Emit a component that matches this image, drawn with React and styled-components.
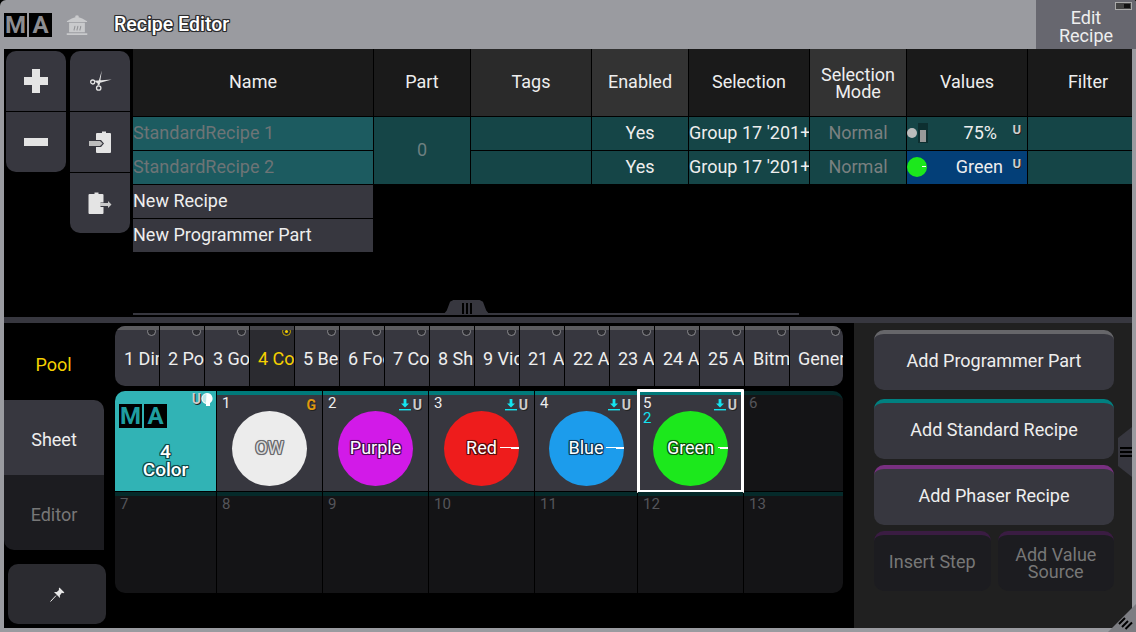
import React from 'react';
import styled, { createGlobalStyle } from 'styled-components';

const outline = (c, w = 1) =>
  [[-w, -w], [w, -w], [-w, w], [w, w], [0, -w], [0, w], [-w, 0], [w, 0]]
    .map(([x, y]) => `${x}px ${y}px 0 ${c}`)
    .concat(`0 0 2px ${c}`)
    .join(', ');

const Global = createGlobalStyle`
  html, body { margin: 0; padding: 0; background: #000; }
  * { box-sizing: border-box; }
`;

const Root = styled.div`
  position: relative;
  width: 1136px;
  height: 632px;
  background: #9a9ba0;
  border-radius: 6px 3px 0 0;
  overflow: hidden;
  display: flex;
  flex-direction: column;
  font-family: Roboto, "Liberation Sans", sans-serif;
  font-size: 18px;
  color: #eee;
`;

const TitleBar = styled.header`
  height: 49px;
  flex: none;
  display: flex;
  align-items: center;
  padding-left: 4px;
`;

const LogoWrap = styled.div`
  display: flex;
  gap: 2px;
`;

const LogoBox = styled.span`
  width: 23px;
  height: 24px;
  background: #000;
  color: ${(p) => p.$color};
  font-weight: 700;
  font-size: 24px;
  line-height: 25px;
  text-align: center;
`;

const PotIcon = styled.svg`
  width: 22px;
  height: 22px;
  margin-left: 14px;
  flex: none;
`;

const Title = styled.h1`
  margin: 0 0 0 26px;
  font-size: 19.5px;
  font-weight: 500;
  color: #fff;
  text-shadow: ${outline('#2c2c2e')};
`;

const EditButton = styled.button`
  position: relative;
  margin-left: auto;
  width: 100px;
  height: 49px;
  border: 0;
  padding: 5px 0 0;
  background: #67676f;
  color: #eee;
  font: inherit;
  line-height: 18px;
  text-align: center;
`;

const Battery = styled.span`
  position: absolute;
  top: 2px;
  right: 4px;
  width: 17px;
  height: 8px;
  border: 1px solid #aaa;
  background: #444;
  &::after {
    content: '';
    position: absolute;
    top: 1px;
    right: 1px;
    width: 6px;
    height: 4px;
    background: #111;
  }
`;

const Body = styled.main`
  flex: 1;
  min-height: 0;
  margin: 0 4px 4px;
  background: #000;
  display: flex;
  flex-direction: column;
`;

const TopPanel = styled.section`
  height: 268px;
  flex: none;
  display: flex;
  flex-direction: column;
`;

const TopContent = styled.div`
  height: 264px;
  flex: none;
  display: flex;
`;

const Tools = styled.div`
  display: flex;
  gap: 4px;
  padding: 2px 0 0 2px;
  width: 129px;
  flex: none;
  align-items: flex-start;
`;

const ToolColumn = styled.div`
  display: flex;
  flex-direction: column;
  gap: 1px;
  width: 60px;
`;

const ToolButton = styled.button`
  width: 60px;
  height: 60px;
  border: 0;
  padding: 0;
  background: #37373f;
  display: flex;
  align-items: center;
  justify-content: center;
  &:first-child { border-radius: 10px 10px 0 0; }
  &:last-child { border-radius: 0 0 10px 10px; }
`;

const Table = styled.div`
  display: grid;
  grid-template-columns: 240px 96px 120px 96px 120px 96px 120px 104px;
  grid-template-rows: 67px 33px 33px 33px 33px;
  gap: 1px;
  align-content: start;
`;

const HeaderCell = styled.div`
  background: ${(p) => p.$bg || '#1a1a1a'};
  color: #eee;
  display: flex;
  align-items: center;
  justify-content: center;
  text-align: center;
  line-height: 17px;
  padding-bottom: ${(p) => p.$pb ?? 2}px;
  padding-left: ${(p) => p.$pl || 0}px;
`;

const Cell = styled.div`
  position: relative;
  background: ${(p) => p.$bg || '#154547'};
  color: ${(p) => p.$color || '#eee'};
  display: flex;
  align-items: center;
  justify-content: ${(p) => p.$align || 'center'};
  padding: 0 ${(p) => p.$pr || 0}px 2px ${(p) => p.$pl || 0}px;
  white-space: nowrap;
  overflow: hidden;
`;

const PartCell = styled(Cell)`
  grid-row: span 2;
`;

const NameCell = styled(Cell)`
  grid-column: 1;
  justify-content: flex-start;
`;

const UBadge = styled.span`
  position: absolute;
  top: 6px;
  right: 6px;
  font-size: 13px;
  line-height: 13px;
  font-weight: 700;
  color: #ccc;
  text-shadow: 1px 1px 0 #222;
`;

const Dot = styled.span`
  position: absolute;
  left: 0;
  top: 11px;
  width: 10px;
  height: 10px;
  border-radius: 50%;
  background: #bcbcbc;
`;

const Fader = styled.span`
  position: absolute;
  left: 11px;
  top: 6px;
  width: 10px;
  height: 20px;
  background: #0d2f30;
  &::after {
    content: '';
    position: absolute;
    left: 2px;
    right: 2px;
    bottom: 1px;
    height: 12px;
    background: #999;
  }
`;

const GreenDot = styled.span`
  position: absolute;
  left: 0;
  top: 6px;
  width: 20px;
  height: 20px;
  border-radius: 50%;
  background: #1ce81c;
  &::after {
    content: '';
    position: absolute;
    right: 1px;
    top: 9px;
    width: 4px;
    height: 1px;
    background: #fff;
  }
`;

const SplitLine = styled.div`
  position: relative;
  height: 2px;
  width: 666px;
  margin-left: 129px;
  flex: none;
  background: #37373f;
`;

const Grip = styled.div`
  position: absolute;
  left: 310px;
  bottom: 0;
  width: 47px;
  height: 15px;
  background: #37373f;
  clip-path: polygon(0 100%, 8% 70%, 15% 12%, 22% 0, 78% 0, 85% 12%, 92% 70%, 100% 100%);
  display: flex;
  justify-content: center;
  align-items: center;
  gap: 2px;
  padding-top: 1px;
  & > i {
    width: 2px;
    height: 11px;
    background: #000;
  }
`;

const Splitter = styled.div`
  height: 6px;
  flex: none;
  background: #37373f;
`;

const Bottom = styled.section`
  flex: 1;
  min-height: 0;
  display: flex;
`;

const SideColumn = styled.div`
  width: 111px;
  flex: none;
  display: flex;
  flex-direction: column;
  align-items: flex-start;
`;

const PoolLabel = styled.div`
  width: 100px;
  height: 77px;
  padding: 6px 1px 0 0;
  display: flex;
  align-items: center;
  justify-content: center;
  color: #f5d000;
`;

const SideTab = styled.button`
  width: 100px;
  height: 75px;
  border: 0;
  padding: 4px 0 0;
  font: inherit;
  background: ${(p) => (p.$active ? '#37373f' : '#1c1c20')};
  color: ${(p) => (p.$active ? '#eee' : '#777')};
  border-radius: ${(p) => (p.$active ? '0 10px 0 0' : '0 0 0 10px')};
`;

const PinButton = styled.button`
  width: 98px;
  height: 60px;
  margin: 14px 0 0 4px;
  border: 0;
  padding: 0;
  border-radius: 10px;
  background: #2b2b30;
  display: flex;
  align-items: center;
  justify-content: center;
`;

const PoolColumn = styled.div`
  width: 728px;
  flex: none;
  padding-top: 3px;
`;

const PoolBar = styled.div`
  height: 60px;
  display: grid;
  grid-template-columns: 44px repeat(14, 44px) 1fr;
  gap: 1px;
  border-radius: 10px;
  overflow: hidden;
  margin-bottom: 5px;
`;

const PoolTab = styled.div`
  position: relative;
  background: ${(p) => (p.$active ? '#2b2b30' : '#37373f')};
  border-top: 4px solid ${(p) => (p.$active ? '#45454a' : '#5c5c5f')};
  color: ${(p) => (p.$active ? '#f5d000' : '#eee')};
  padding-left: ${(p) => p.$pl || 8}px;
  line-height: 58px;
  white-space: nowrap;
  overflow: hidden;
`;

const Bullet = styled.span`
  position: absolute;
  top: -3px;
  right: 3px;
  width: 9px;
  height: 9px;
  border-radius: 50%;
  border: 1px solid ${(p) => (p.$active ? '#c9a800' : '#8a8a8e')};
  background: #2b2b30;
  &::after {
    content: '';
    display: ${(p) => (p.$active ? 'block' : 'none')};
    width: 3px;
    height: 3px;
    margin: 2px;
    border-radius: 50%;
    background: #f5d000;
  }
`;

const Sheet = styled.div`
  display: grid;
  grid-template-columns: 101px 105px 105px 105px 102px 105px 99px;
  grid-template-rows: 100px 101px;
  gap: 1px;
`;

const Tile = styled.div`
  position: relative;
  background: ${(p) => (p.$empty ? '#141416' : '#37373f')};
  border-top: 4px solid ${(p) => p.$stripe || '#007a7a'};
  border-radius: ${(p) => p.$radius || '0'};
  display: flex;
  justify-content: center;
  padding-top: 16px;
  ${(p) =>
    p.$selected &&
    `&::after {
      content: '';
      position: absolute;
      inset: -6px -1px -2px -1px;
      border: 3px solid #fff;
      border-radius: 1px;
      pointer-events: none;
    }`}
`;

const PoolInfoTile = styled.div`
  position: relative;
  background: #31b3b5;
  border-radius: 10px 0 0 0;
  padding: 13px 4px 0;
  display: flex;
  flex-direction: column;
`;

const InfoText = styled.div`
  margin-top: 15px;
  text-align: center;
  font-weight: 500;
  font-size: 19px;
  line-height: 18px;
  color: #fff;
  text-shadow: ${outline('#0d4a4c')};
`;

const TileNumber = styled.span`
  position: absolute;
  left: ${(p) => p.$left ?? 5}px;
  top: ${(p) => p.$top ?? 0}px;
  font-size: 15px;
  line-height: 16px;
  color: ${(p) => (p.$dim ? '#55555a' : p.$color || '#eee')};
`;

const Circle = styled.div`
  position: relative;
  width: 75px;
  height: 75px;
  padding-bottom: 2px;
  border-radius: 50%;
  background: ${(p) => p.$color};
  display: flex;
  align-items: center;
  justify-content: center;
  color: ${(p) => p.$text || '#fff'};
  text-shadow: ${(p) => outline(p.$ring)};
`;

const Needle = styled.span`
  position: absolute;
  right: 0;
  top: 36px;
  width: ${(p) => p.$w}px;
  height: 1px;
  background: #fff;
  &::after {
    content: '';
    position: absolute;
    right: 0;
    top: 0;
    width: 8px;
    height: 2px;
    background: #fff;
  }
`;

const TileLabel = styled.span`
  position: relative;
`;

const TileFlags = styled.span`
  position: absolute;
  right: 6px;
  top: 3px;
  display: flex;
  align-items: center;
  gap: 2px;
`;

const GroupFlag = styled.span`
  font-size: 14px;
  line-height: 14px;
  font-weight: 700;
  color: #e09a10;
  text-shadow: 1px 1px 0 #222;
`;

const SmallU = styled.span`
  font-size: 14px;
  line-height: 14px;
  font-weight: 700;
  color: #ccc;
  text-shadow: 1px 1px 0 #222;
`;

const InfoFlags = styled.span`
  position: absolute;
  right: 3px;
  top: 1px;
  display: flex;
  align-items: center;
`;

const RightPanel = styled.aside`
  position: relative;
  flex: 1;
  margin-left: 11px;
  background: #202020;
  padding: 7px 18px 0 20px;
  display: flex;
  flex-direction: column;
  gap: 6px;
`;

const ActionButton = styled.button`
  flex: ${(p) => (p.$half ? 1 : 'none')};
  width: ${(p) => (p.$half ? 'auto' : '100%')};
  height: 60px;
  border: 0;
  border-top: 4px solid ${(p) => p.$stripe};
  border-radius: 10px;
  padding: 0 0 ${(p) => p.$pb ?? 4}px;
  margin-bottom: ${(p) => p.$mb || 0}px;
  background: ${(p) => (p.$disabled ? '#1c1c20' : '#37373f')};
  color: ${(p) => (p.$disabled ? '#777' : '#eee')};
  font: inherit;
  line-height: 17px;
`;

const ActionRow = styled.div`
  display: flex;
  gap: 7px;
`;

const SideGrip = styled.div`
  position: absolute;
  right: 0;
  top: 104px;
  width: 14px;
  height: 50px;
  background: #37373f;
  clip-path: polygon(0 22%, 100% 0, 100% 100%, 0 78%);
  display: flex;
  flex-direction: column;
  justify-content: center;
  align-items: flex-end;
  gap: 2px;
  & > i {
    width: 12px;
    height: 2px;
    background: #000;
  }
`;

const CornerGrip = styled.svg`
  position: absolute;
  right: 0;
  bottom: 0;
  width: 28px;
  height: 28px;
`;

const Logo = ({ color }) => (
  <LogoWrap>
    <LogoBox $color={color}>M</LogoBox>
    <LogoBox $color={color}>A</LogoBox>
  </LogoWrap>
);

const Plus = () => (
  <svg width="24" height="24" viewBox="0 0 24 24">
    <path d="M8 0h8v8h8v8h-8v8H8v-8H0V8h8z" fill="#e4e4e4" />
  </svg>
);

const Minus = () => (
  <svg width="24" height="8" viewBox="0 0 24 8">
    <rect width="24" height="8" fill="#e4e4e4" />
  </svg>
);

const Scissors = () => (
  <svg width="24" height="24" viewBox="0 0 24 24" fill="none">
    <circle cx="4.7" cy="13" r="2" stroke="#e4e4e4" strokeWidth="1.3" />
    <circle cx="10.7" cy="19" r="2.2" stroke="#e4e4e4" strokeWidth="1.3" />
    <path d="M6.300 11.700 23.800 10.600 9.500 14.400zM9.300 16.800 13.800 1.600 11.800 15.500z" fill="#e4e4e4" />
  </svg>
);

const ClipIn = () => (
  <svg width="24" height="24" viewBox="0 0 24 24">
    <path d="M9 3h5V1.600h4V3h4a1 1 0 0 1 1 1v18a1 1 0 0 1-1 1H9a1 1 0 0 1-1-1v-5h5l3-3.500L13 10H8V4a1 1 0 0 1 1-1z" fill="#e4e4e4" />
    <path d="M1 11h11l2.600 2.500L12 16H1z" fill="#bdbdbd" />
  </svg>
);

const ClipOut = () => (
  <svg width="24" height="24" viewBox="0 0 24 24">
    <path d="M1.500 3h5V1.600h4V3h4a1 1 0 0 1 1 1v7.500h-3V16h3v6a1 1 0 0 1-1 1h-13a1 1 0 0 1-1-1V4a1 1 0 0 1 1-1z" fill="#e4e4e4" />
    <path d="M12 12h8V10l3.500 3.500L20 17v-2h-8z" fill="#c9c9c9" />
  </svg>
);

const Pot = () => (
  <PotIcon viewBox="0 0 24 24">
    <path d="M1 8C5 5.500 8 3.900 10.300 3.500a1.800 1.600 0 1 1 3.400 0C16 3.900 19 5.500 23 8v.6H1z" fill="#c9cacc" />
    <path d="M3.400 9.600h17.200v10.400H3.400z" fill="#c9cacc" />
    <path d="M.8 21h22.400v1.800H.8z" fill="#c9cacc" />
    <path d="M9 18c-1-2 1.400-3 .6-5M12.200 18c-1-2 1.400-3 .6-5M15.400 18c-1-2 1.400-3 .6-5" stroke="#8f9094" strokeWidth="1.100" fill="none" />
  </PotIcon>
);

const Pin = () => (
  <svg width="15" height="15" viewBox="0 0 15 15">
    <path d="M.5 14.500 6 8.600" stroke="#e8e8e8" strokeWidth="1" />
    <path d="M9.400.6 14.400 5.600 13.200 6.200 11.900 5.800 9.800 8.400 10 11 4 5 6.800 5 9 3.100 8.800 1.800z" fill="#e8e8e8" />
  </svg>
);

const ArrowFlag = () => (
  <svg width="12" height="12" viewBox="0 0 12 12">
    <path d="M4.600 0h2.800v4.600H10L6 8.600 2 4.600h2.600z" fill="#14e4f0" />
    <rect x="0" y="10" width="12" height="1.400" fill="#14e4f0" />
  </svg>
);

const Bulb = () => (
  <svg width="12" height="13" viewBox="0 0 12 13">
    <path d="M6 0a5.600 5.600 0 0 1 3 10.300V13H5V11C2.500 10.500.4 8.500.4 5.600A5.600 5.600 0 0 1 6 0z" fill="#fff" />
    <path d="M5.500 1A4.600 4.600 0 0 0 1.400 5.600 4.500 4.500 0 0 0 5 10z" fill="#bfe8e8" />
  </svg>
);

const headers = [
  { label: 'Name' },
  { label: 'Part' },
  { label: 'Tags', bg: '#2a2a2a' },
  { label: 'Enabled', bg: '#333333' },
  { label: 'Selection' },
  { label: <>Selection<br />Mode</>, bg: '#333333', pb: 0 },
  { label: 'Values' },
  { label: 'Filter', pl: 16 },
];

const poolTabs = [
  '1 Dimmer', '2 Position', '3 Gobo', '4 Color', '5 Beam', '6 Focus', '7 Control', '8 Shapers',
  '9 Video', '21 All', '22 All', '23 All', '24 All', '25 All', 'Bitmap', 'General',
];

const presets = [
  { n: 2, label: 'Purple', color: '#d21ae8', ring: '#4a0854' },
  { n: 3, label: 'Red', color: '#ee1c1c', ring: '#600a0a', needle: 19 },
  { n: 4, label: 'Blue', color: '#1c9cec', ring: '#0a3a5c', needle: 18 },
  { n: 5, label: 'Green', color: '#1ce81c', ring: '#0a540a', needle: 10, selected: true },
];

const Flags = () => (
  <TileFlags>
    <ArrowFlag />
    <SmallU>U</SmallU>
  </TileFlags>
);

export default function App() {
  return (
    <Root>
      <Global />
      <TitleBar>
        <Logo color="#8c8d91" />
        <Pot />
        <Title>Recipe Editor</Title>
        <EditButton>
          <Battery />
          Edit<br />Recipe
        </EditButton>
      </TitleBar>
      <Body>
        <TopPanel>
          <TopContent>
            <Tools>
              <ToolColumn>
                <ToolButton><Plus /></ToolButton>
                <ToolButton><Minus /></ToolButton>
              </ToolColumn>
              <ToolColumn>
                <ToolButton><Scissors /></ToolButton>
                <ToolButton><ClipIn /></ToolButton>
                <ToolButton><ClipOut /></ToolButton>
              </ToolColumn>
            </Tools>
            <Table>
              {headers.map((h, i) => (
                <HeaderCell key={i} $bg={h.bg} $pb={h.pb} $pl={h.pl}>{h.label}</HeaderCell>
              ))}

              <NameCell $bg="#1c5b60" $color="#6d7476">StandardRecipe 1</NameCell>
              <PartCell $color="#6d7f80">0</PartCell>
              <Cell />
              <Cell>Yes</Cell>
              <Cell $align="flex-start">Group 17 '201+</Cell>
              <Cell $color="#7a8080">Normal</Cell>
              <Cell $align="flex-end" $pr={30}>
                <Dot />
                <Fader />
                75%
                <UBadge>U</UBadge>
              </Cell>
              <Cell />

              <NameCell $bg="#1c5b60" $color="#6d7476">StandardRecipe 2</NameCell>
              <Cell />
              <Cell>Yes</Cell>
              <Cell $align="flex-start">Group 17 '201+</Cell>
              <Cell $color="#7a8080">Normal</Cell>
              <Cell $align="flex-end" $pr={24} $bg="#033f78">
                <GreenDot />
                Green
                <UBadge>U</UBadge>
              </Cell>
              <Cell />

              <NameCell $bg="#37373f">New Recipe</NameCell>
              <NameCell $bg="#37373f">New Programmer Part</NameCell>
            </Table>
          </TopContent>
          <SplitLine>
            <Grip><i /><i /><i /></Grip>
          </SplitLine>
        </TopPanel>
        <Splitter />
        <Bottom>
          <SideColumn>
            <PoolLabel>Pool</PoolLabel>
            <SideTab $active>Sheet</SideTab>
            <SideTab>Editor</SideTab>
            <PinButton><Pin /></PinButton>
          </SideColumn>
          <PoolColumn>
            <PoolBar>
              {poolTabs.map((t, i) => (
                <PoolTab key={t} $active={i === 3} $pl={i === 0 ? 9 : 8}>
                  <Bullet $active={i === 3} />
                  {t}
                </PoolTab>
              ))}
            </PoolBar>
            <Sheet>
              <PoolInfoTile>
                <InfoFlags>
                  <SmallU>U</SmallU>
                  <Bulb />
                </InfoFlags>
                <Logo color="#1f9ea0" />
                <InfoText>4<br />Color</InfoText>
              </PoolInfoTile>
              <Tile>
                <TileNumber>1</TileNumber>
                <TileFlags><GroupFlag>G</GroupFlag></TileFlags>
                <Circle $color="#ececec" $ring="#6a6a6e" $text="#dcdcdc">OW</Circle>
              </Tile>
              {presets.map((p) => (
                <Tile key={p.n} $selected={p.selected}>
                  <TileNumber>{p.n}</TileNumber>
                  {p.selected && <TileNumber $top={15} $color="#14e4f0">2</TileNumber>}
                  <Flags />
                  <Circle $color={p.color} $ring={p.ring}>
                    {p.needle && <Needle $w={p.needle} />}
                    <TileLabel>{p.label}</TileLabel>
                  </Circle>
                </Tile>
              ))}
              <Tile $empty $stripe="#052a2a" $radius="0 10px 0 0">
                <TileNumber $dim>6</TileNumber>
              </Tile>
              {[7, 8, 9, 10, 11, 12, 13].map((n) => (
                <Tile
                  key={n}
                  $empty
                  $stripe="#052a2a"
                  $radius={n === 7 ? '0 0 0 10px' : n === 13 ? '0 0 10px 0' : '0'}
                >
                  <TileNumber $dim>{n}</TileNumber>
                </Tile>
              ))}
            </Sheet>
          </PoolColumn>
          <RightPanel>
            <ActionButton $stripe="#66666a" $mb={3}>Add Programmer Part</ActionButton>
            <ActionButton $stripe="#008080">Add Standard Recipe</ActionButton>
            <ActionButton $stripe="#783080">Add Phaser Recipe</ActionButton>
            <ActionRow>
              <ActionButton $half $disabled $stripe="#3a1c42">Insert Step</ActionButton>
              <ActionButton $half $disabled $pb={0} $stripe="#3a1c42">Add Value<br />Source</ActionButton>
            </ActionRow>
            <SideGrip><i /><i /><i /></SideGrip>
          </RightPanel>
        </Bottom>
      </Body>
      <CornerGrip viewBox="0 0 28 28">
        <path d="M28 0V28H0z" fill="#7c7d82" />
        <path d="M11 20 17 14M14 23 20 17M17.500 25 24 18.500" stroke="#000" strokeWidth="2" fill="none" />
      </CornerGrip>
    </Root>
  );
}
